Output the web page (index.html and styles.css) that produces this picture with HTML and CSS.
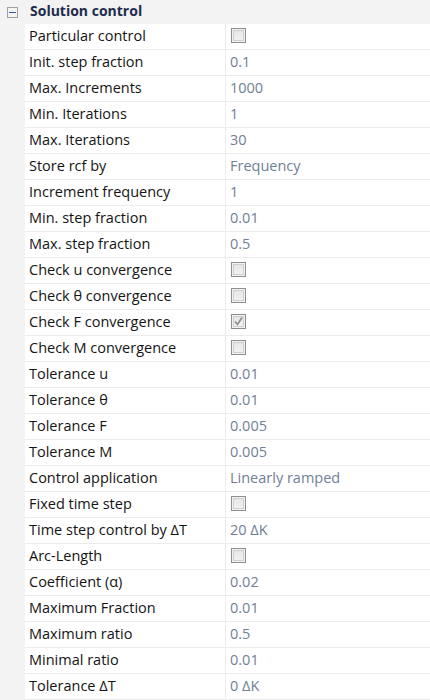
FILE: index.html
```html
<!DOCTYPE html>
<html>
<head>
<meta charset="utf-8">
<link rel="stylesheet" href="styles.css">
</head>
<body>
<div class="panel">
  <div class="cat">
    <span class="toggle"><span class="minus"></span></span>
    <span class="cat-title">Solution control</span>
  </div>
  <div class="body">
    <div class="gutter"></div>
    <div class="rows">
      <div class="row"><div class="name">Particular control</div><div class="val"><span class="cb"></span></div></div>
      <div class="row"><div class="name">Init. step fraction</div><div class="val">0.1</div></div>
      <div class="row"><div class="name">Max. Increments</div><div class="val">1000</div></div>
      <div class="row"><div class="name">Min. Iterations</div><div class="val">1</div></div>
      <div class="row"><div class="name">Max. Iterations</div><div class="val">30</div></div>
      <div class="row"><div class="name">Store rcf by</div><div class="val">Frequency</div></div>
      <div class="row"><div class="name">Increment frequency</div><div class="val">1</div></div>
      <div class="row"><div class="name">Min. step fraction</div><div class="val">0.01</div></div>
      <div class="row"><div class="name">Max. step fraction</div><div class="val">0.5</div></div>
      <div class="row"><div class="name">Check u convergence</div><div class="val"><span class="cb"></span></div></div>
      <div class="row"><div class="name">Check θ convergence</div><div class="val"><span class="cb"></span></div></div>
      <div class="row"><div class="name">Check F convergence</div><div class="val"><span class="cb checked"><svg viewBox="0 0 15 15" width="15" height="15"><path d="M4 7.5 L6.5 10.5 L11 3.5" fill="none" stroke="#8c8c8c" stroke-width="1.6"/></svg></span></div></div>
      <div class="row"><div class="name">Check M convergence</div><div class="val"><span class="cb"></span></div></div>
      <div class="row"><div class="name">Tolerance u</div><div class="val">0.01</div></div>
      <div class="row"><div class="name">Tolerance θ</div><div class="val">0.01</div></div>
      <div class="row"><div class="name">Tolerance F</div><div class="val">0.005</div></div>
      <div class="row"><div class="name">Tolerance M</div><div class="val">0.005</div></div>
      <div class="row"><div class="name">Control application</div><div class="val">Linearly ramped</div></div>
      <div class="row"><div class="name">Fixed time step</div><div class="val"><span class="cb"></span></div></div>
      <div class="row"><div class="name">Time step control by ΔT</div><div class="val">20 ΔK</div></div>
      <div class="row"><div class="name">Arc-Length</div><div class="val"><span class="cb"></span></div></div>
      <div class="row"><div class="name">Coefficient (α)</div><div class="val">0.02</div></div>
      <div class="row"><div class="name">Maximum Fraction</div><div class="val">0.01</div></div>
      <div class="row"><div class="name">Maximum ratio</div><div class="val">0.5</div></div>
      <div class="row"><div class="name">Minimal ratio</div><div class="val">0.01</div></div>
      <div class="row"><div class="name">Tolerance ΔT</div><div class="val">0 ΔK</div></div>
    </div>
  </div>
</div>
</body>
</html>
```
FILE: styles.css
```css
html, body {
  margin: 0;
  padding: 0;
  background: #ffffff;
}
.panel {
  width: 430px;
  font-family: "Open Sans", "Noto Sans", sans-serif;
  font-size: 14.5px;
  color: #141414;
}
.cat {
  height: 24px;
  background: #f3f3f3;
  display: flex;
  align-items: center;
  padding-bottom: 3px;
  box-sizing: border-box;
}
.toggle {
  width: 9px;
  height: 9px;
  border: 1px solid #a0a0a0;
  background: #f4f4f4;
  margin-left: 7px;
  margin-right: 12px;
  margin-top: 3px;
  display: flex;
  align-items: center;
  justify-content: center;
}
.minus {
  width: 7px;
  height: 1px;
  background: #3b5ea8;
}
.cat-title {
  font-weight: bold;
  color: #1f2b4d;
  font-size: 14px;
}
.body {
  display: flex;
}
.gutter {
  width: 25px;
  background: #f3f3f3;
  flex: none;
}
.rows {
  flex: 1;
}
.row {
  display: flex;
  height: 25px;
  border-bottom: 1px solid #ececec;
}
.name {
  width: 196px;
  padding-left: 4px;
  padding-bottom: 3px;
  border-right: 1px solid #ececec;
  display: flex;
  align-items: center;
  white-space: nowrap;
}
.val {
  flex: 1;
  padding-left: 4px;
  padding-bottom: 3px;
  display: flex;
  align-items: center;
  color: #6f7f96;
  white-space: nowrap;
}
.cb {
  width: 13px;
  height: 13px;
  border: 1px solid #8e8e8e;
  margin-left: 1px;
  margin-top: 1px;
  background: linear-gradient(#e4e4e4, #f4f4f4);
  box-shadow: inset 0 0 0 1px #f2f2f2, inset 0 0 0 2px #cfcfcf;
  position: relative;
}
.cb svg {
  position: absolute;
  left: -1px;
  top: -1px;
}
```
